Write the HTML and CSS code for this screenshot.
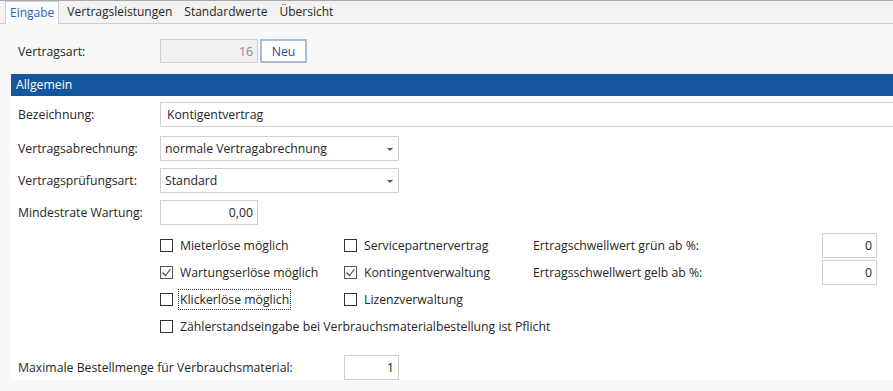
FILE: index.html
```html
<!DOCTYPE html>
<html lang="de">

<head>
    <meta charset="UTF-8">
    <title>Vertragsart</title>
    <link rel="stylesheet" href="styles.css">
</head>

<body>
    <div class="tabs">
        <div class="tab active">Eingabe</div>
        <div class="tab">Vertragsleistungen</div>
        <div class="tab">Standardwerte</div>
        <div class="tab">Übersicht</div>
    </div>

    <div class="page">
        <div class="row top-row">
            <label class="label">Vertragsart:</label>
            <input class="field number readonly" type="text" value="16" readonly>
            <button class="btn">Neu</button>
        </div>

        <div class="panel">
            <div class="panel-head">Allgemein</div>
            <div class="panel-body">
                <div class="row first">
                    <label class="label">Bezeichnung:</label>
                    <input class="field wide" type="text" value="Kontigentvertrag">
                </div>
                <div class="row">
                    <label class="label">Vertragsabrechnung:</label>
                    <div class="field combo">normale Vertragabrechnung <span class="arrow"></span></div>
                </div>
                <div class="row">
                    <label class="label">Vertragsprüfungsart:</label>
                    <div class="field combo">Standard <span class="arrow"></span></div>
                </div>
                <div class="row">
                    <label class="label">Mindestrate Wartung:</label>
                    <input class="field number" type="text" value="0,00">
                </div>

                <div class="options">
                    <div class="check"><span class="box"></span>Mieterlöse möglich</div>
                    <div class="check"><span class="box"></span>Servicepartnervertrag</div>
                    <div class="opt-label">Ertragschwellwert grün ab %:</div>
                    <input class="field number small" type="text" value="0">

                    <div class="check"><span class="box checked"><svg width="11" height="11" viewBox="0 0 11 11"><polyline points="1.5,5.5 4.5,8.5 9.5,2" fill="none" stroke="#555" stroke-width="1.2"/></svg></span>Wartungserlöse möglich</div>
                    <div class="check"><span class="box checked"><svg width="11" height="11" viewBox="0 0 11 11"><polyline points="1.5,5.5 4.5,8.5 9.5,2" fill="none" stroke="#555" stroke-width="1.2"/></svg></span>Kontingentverwaltung</div>
                    <div class="opt-label">Ertragsschwellwert gelb ab %:</div>
                    <input class="field number small" type="text" value="0">

                    <div class="check"><span class="box"></span><span class="focus">Klickerlöse möglich</span></div>
                    <div class="check"><span class="box"></span>Lizenzverwaltung</div>
                    <div></div>
                    <div></div>

                    <div class="check full"><span class="box"></span>Zählerstandseingabe bei Verbrauchsmaterialbestellung ist Pflicht</div>
                </div>

                <div class="row max-row">
                    <label class="label long">Maximale Bestellmenge für Verbrauchsmaterial:</label>
                    <input class="field number small" type="text" value="1">
                </div>
            </div>
        </div>
    </div>
</body>

</html>
```

FILE: styles.css
```css
body {
    margin: 0;
    background: #f8f8f8;
    font-family: "Open Sans", "Noto Sans", sans-serif;
    font-size: 12.25px;
    color: #262626;
    width: 893px;
    height: 391px;
    overflow: hidden;
}

.tabs {
    display: flex;
    height: 22px;
    padding-left: 5px;
    background: #f2f2f2;
    border-top: 1px solid #a9a9a9;
    border-bottom: 1px solid #cfcfcf;
    font-size: 12px;
}

.tab {
    padding: 0 4px;
    line-height: 22px;
    margin-right: 4px;
}

.tab.active {
    background: #fafafa;
    color: #2e63b3;
    border: 1px solid #d0d0d0;
    border-bottom: none;
    margin-bottom: -1px;
    line-height: 22px;
}

.page {
    padding-left: 11px;
}

.row {
    display: flex;
    align-items: center;
    height: 25px;
    margin-bottom: 7px;
}

.row.first {
    margin-bottom: 9px;
}

.label {
    width: 142px;
    padding-left: 7px;
    flex-shrink: 0;
}

.top-row {
    margin-top: 15px;
    margin-bottom: 11px;
    height: 24px;
}

.field {
    box-sizing: border-box;
    height: 25px;
    border: 1px solid #d0d0d0;
    background: #fff;
    font-family: inherit;
    font-size: 12.25px;
    color: #262626;
    padding: 0 4px;
    margin: 0;
    outline: none;
}

.number {
    width: 98px;
    text-align: right;
}

.readonly {
    background: #f0f0f0;
    color: #8a8a8a;
    height: 24px;
}

.btn {
    box-sizing: border-box;
    height: 24px;
    width: 47px;
    margin-left: 2px;
    background: #fff;
    border: 2px solid #a9bcd9;
    font-family: inherit;
    font-size: 12.25px;
    color: #1d4f91;
    padding: 0;
}

.panel {
    background: #fff;
}

.panel-head {
    background: #15579e;
    color: #fff;
    height: 22px;
    line-height: 21px;
    padding-left: 5px;
}

.panel-body {
    padding-top: 6px;
}

.wide {
    flex: 1;
    border-right: none;
    padding-left: 6px;
}

.combo {
    width: 239px;
    display: flex;
    align-items: center;
    justify-content: space-between;
    padding: 0 5px 0 4px;
}

.arrow {
    width: 0;
    height: 0;
    border-left: 3px solid transparent;
    border-right: 3px solid transparent;
    border-top: 3px solid #555;
    margin-top: 1px;
}

.options {
    display: grid;
    grid-template-columns: 184px 189px 289px 55px;
    grid-auto-rows: 27px;
    align-items: center;
    margin-left: 149px;
    margin-top: 6px;
}

.check {
    display: flex;
    align-items: center;
    white-space: nowrap;
}

.check.full {
    grid-column: 1 / 5;
}

.box {
    box-sizing: border-box;
    width: 13px;
    height: 13px;
    border: 1px solid #333;
    background: #fff;
    margin-right: 7px;
    display: flex;
    align-items: center;
    justify-content: center;
}

.box.checked {
    border-color: #555;
}

.focus {
    outline: 1px dotted #333;
    outline-offset: 1px;
}

.small {
    width: 55px;
}

.max-row {
    margin-top: 15px;
}

.long {
    width: 326px;
}
```
